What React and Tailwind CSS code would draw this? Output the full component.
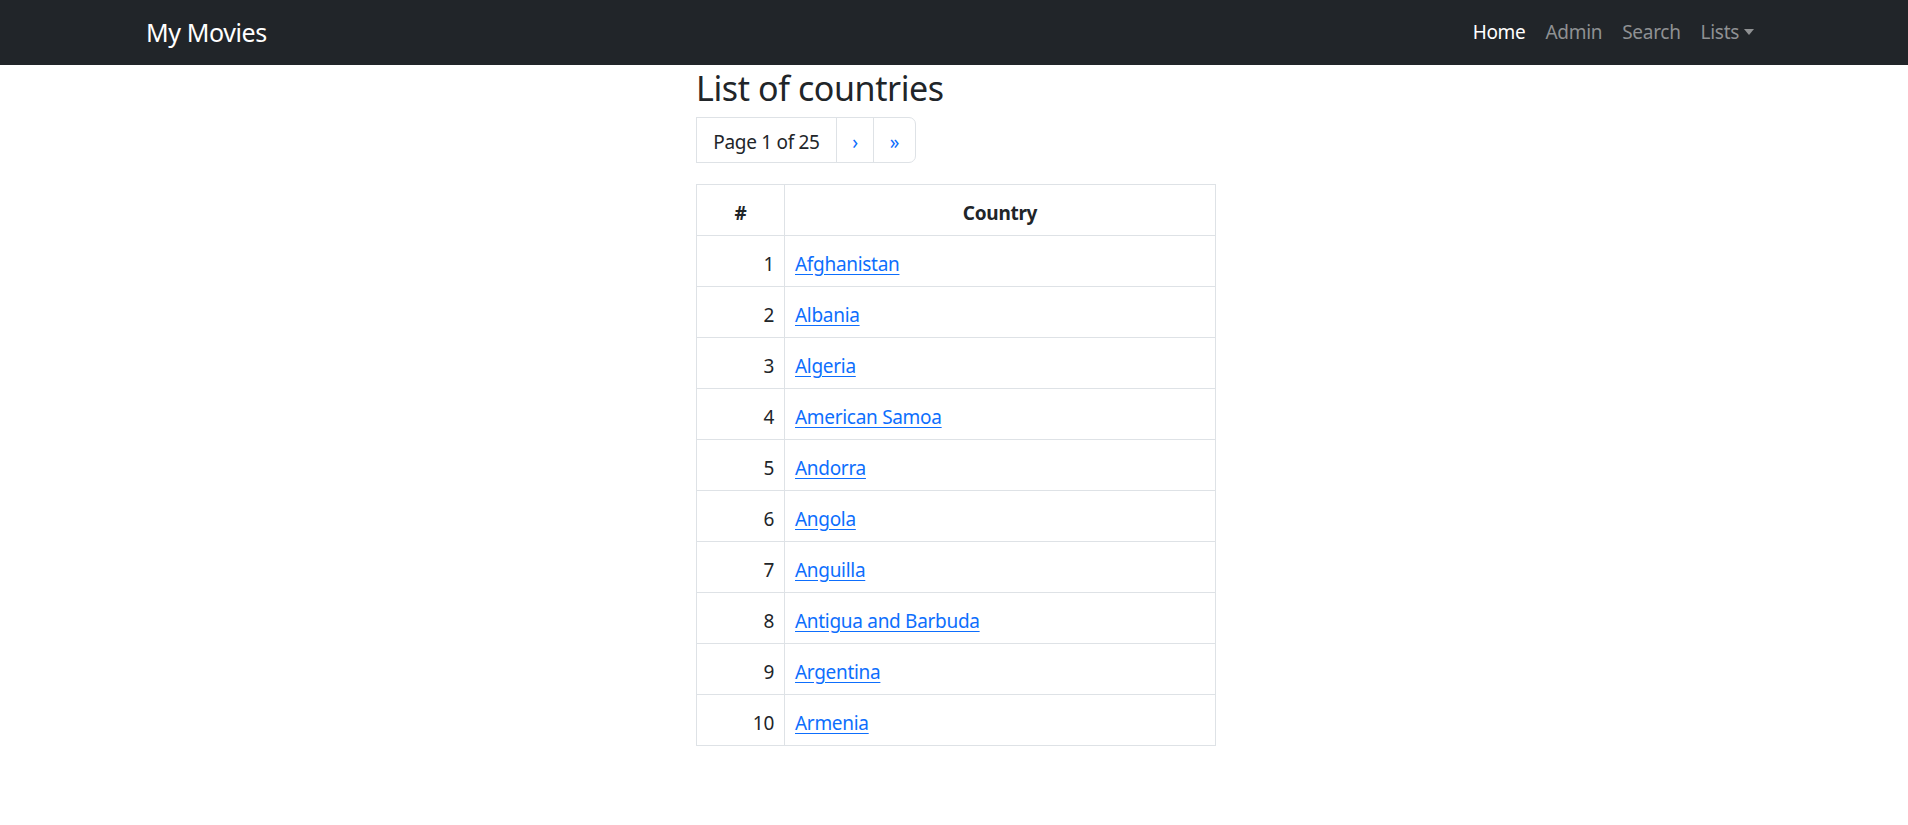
import React from "react";

const countries = [
  "Afghanistan",
  "Albania",
  "Algeria",
  "American Samoa",
  "Andorra",
  "Angola",
  "Anguilla",
  "Antigua and Barbuda",
  "Argentina",
  "Armenia",
];

export default function App() {
  return (
    <div
      className="min-h-[825px] bg-white text-[#212529] text-[19px] leading-[30px] tracking-[-0.3px]"
      style={{ fontFamily: '"Noto Sans", "Open Sans", "Liberation Sans", sans-serif' }}
    >
      <nav className="h-[65px] bg-[#212529]">
        <div className="w-[1650px] mx-auto px-[15px] h-full flex items-center justify-between">
          <a className="text-[25px] leading-[38px] tracking-[-0.4px] text-white pl-[2px] -mt-[2px]">My Movies</a>
          <ul className="flex items-center -mt-[2px]">
            <li><a className="block px-[10px] text-white">Home</a></li>
            <li><a className="block px-[10px] text-[#8f9193]">Admin</a></li>
            <li><a className="block px-[10px] text-[#8f9193]">Search</a></li>
            <li>
              <a className="flex items-center px-[10px] text-[#8f9193]">
                Lists
                <span className="ml-[5px] w-0 h-0 border-t-[6px] border-t-[#8f9193] border-x-[5px] border-x-transparent"></span>
              </a>
            </li>
          </ul>
        </div>
      </nav>

      <main className="mx-auto w-[524px] pl-[4px]">
        <h3 className="text-[34px] leading-[42px] tracking-[-0.4px] pt-[2px] mb-[8px] font-normal">List of countries</h3>

        <div className="flex h-[46px] mb-[21px]">
          <span className="w-[141px] pt-[3px] flex items-center justify-center border border-[#dee2e6] text-[#212529]">
            Page 1 of 25
          </span>
          <a className="w-[38px] pt-[3px] -ml-px flex items-center justify-center border border-[#dee2e6] text-[#0d6efd]">›</a>
          <a className="w-[43px] pt-[3px] -ml-px flex items-center justify-center border border-[#dee2e6] rounded-r-[7px] text-[#0d6efd]">»</a>
        </div>

        <table className="w-[520px] border-collapse border border-[#dee2e6]">
          <thead>
            <tr>
              <th className="w-[88px] border border-[#dee2e6] pt-[13px] pb-[7px] px-[10px] text-center font-bold">#</th>
              <th className="border border-[#dee2e6] pt-[13px] pb-[7px] px-[10px] text-center font-bold">Country</th>
            </tr>
          </thead>
          <tbody>
            {countries.map((c, i) => (
              <tr key={c}>
                <td className="border border-[#dee2e6] pt-[13px] pb-[7px] px-[10px] text-right">{i + 1}</td>
                <td className="border border-[#dee2e6] pt-[13px] pb-[7px] px-[10px] text-left">
                  <a className="text-[#0d6efd] underline underline-offset-[3px]">{c}</a>
                </td>
              </tr>
            ))}
          </tbody>
        </table>
      </main>
    </div>
  );
}
